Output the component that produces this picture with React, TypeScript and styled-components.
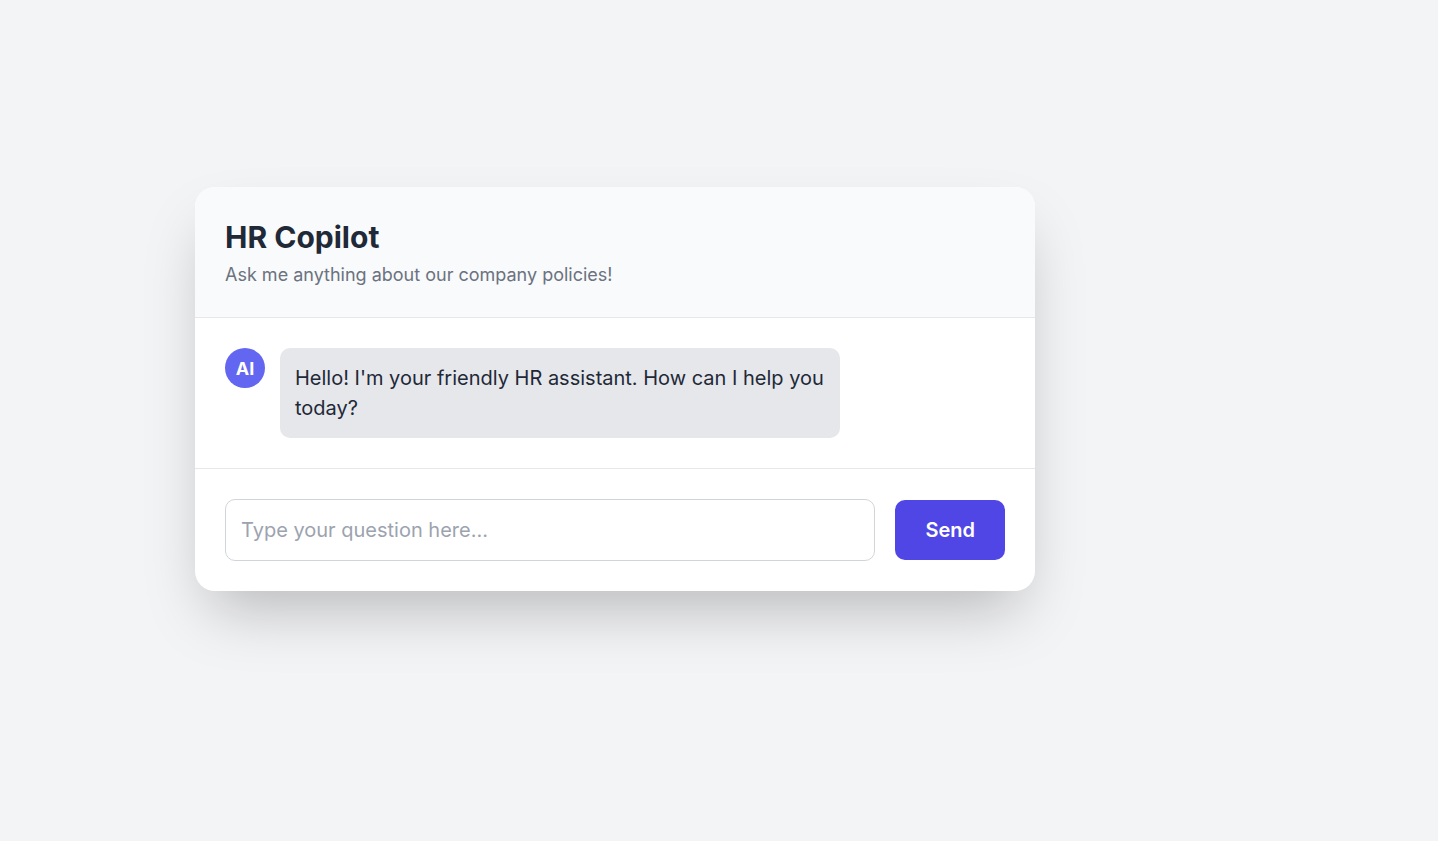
import React, { useState } from "react";
import styled, { createGlobalStyle } from "styled-components";

const GlobalStyle = createGlobalStyle`
  *, *::before, *::after {
    box-sizing: border-box;
  }
  body {
    margin: 0;
    background: #f3f4f6;
    color: #1f2937;
    font-family: Inter, "Liberation Sans", sans-serif;
    font-size: 20px;
    line-height: 30px;
  }
`;

const Page = styled.main`
  display: flex;
  align-items: center;
  justify-content: center;
  min-height: 100vh;
  padding: 0 208px 63px 0;
`;

const Card = styled.section`
  display: flex;
  flex-direction: column;
  flex: 1;
  max-width: 840px;
  overflow: hidden;
  background: #ffffff;
  border-radius: 20px;
  box-shadow: 0 31px 63px -15px rgba(0, 0, 0, 0.25);
`;

const Header = styled.header`
  padding: 30px;
  background: #f9fafb;
  border-bottom: 1px solid #e5e7eb;
`;

const Title = styled.h1`
  margin: 0;
  font-size: 30px;
  font-weight: 700;
  line-height: 40px;
`;

const Subtitle = styled.p`
  margin: 5px 0 0;
  color: #6b7280;
  font-size: 18px;
  line-height: 25px;
`;

const Messages = styled.div`
  display: flex;
  flex-direction: column;
  gap: 20px;
  padding: 30px;
`;

const Message = styled.div`
  display: flex;
  align-items: flex-start;
  gap: 15px;
`;

const Avatar = styled.span`
  display: flex;
  flex-shrink: 0;
  align-items: center;
  justify-content: center;
  width: 40px;
  height: 40px;
  border-radius: 50%;
  background: #6366f1;
  color: #ffffff;
  font-size: 18px;
  font-weight: 700;
  line-height: 25px;
`;

const Bubble = styled.p`
  margin: 0;
  max-width: 560px;
  padding: 15px;
  border-radius: 10px;
  background: #e5e7eb;
`;

const Composer = styled.form`
  display: flex;
  align-items: center;
  gap: 20px;
  padding: 30px;
  border-top: 1px solid #e5e7eb;
`;

const QuestionInput = styled.input`
  flex: 1;
  min-width: 0;
  padding: 15px;
  border: 1px solid #d1d5db;
  border-radius: 10px;
  background: #ffffff;
  color: inherit;
  font: inherit;
  height: 62px;

  &::placeholder {
    color: #9ca3af;
    opacity: 1;
  }
  &:focus {
    outline: 2px solid #6366f1;
  }
`;

const SendButton = styled.button`
  padding: 15px 30px;
  border: 0;
  border-radius: 10px;
  background: #4f46e5;
  color: #ffffff;
  font: inherit;
  font-weight: 600;
  cursor: pointer;

  &:hover {
    background: #4338ca;
  }
`;

export default function App() {
  const [question, setQuestion] = useState("");

  return (
    <>
      <GlobalStyle />
      <Page>
        <Card>
          <Header>
            <Title>HR Copilot</Title>
            <Subtitle>Ask me anything about our company policies!</Subtitle>
          </Header>
          <Messages>
            <Message>
              <Avatar>AI</Avatar>
              <Bubble>
                Hello! I'm your friendly HR assistant. How can I help you today?
              </Bubble>
            </Message>
          </Messages>
          <Composer onSubmit={(event) => event.preventDefault()}>
            <QuestionInput
              type="text"
              aria-label="Your question"
              placeholder="Type your question here..."
              value={question}
              onChange={(event) => setQuestion(event.target.value)}
            />
            <SendButton type="submit">Send</SendButton>
          </Composer>
        </Card>
      </Page>
    </>
  );
}
